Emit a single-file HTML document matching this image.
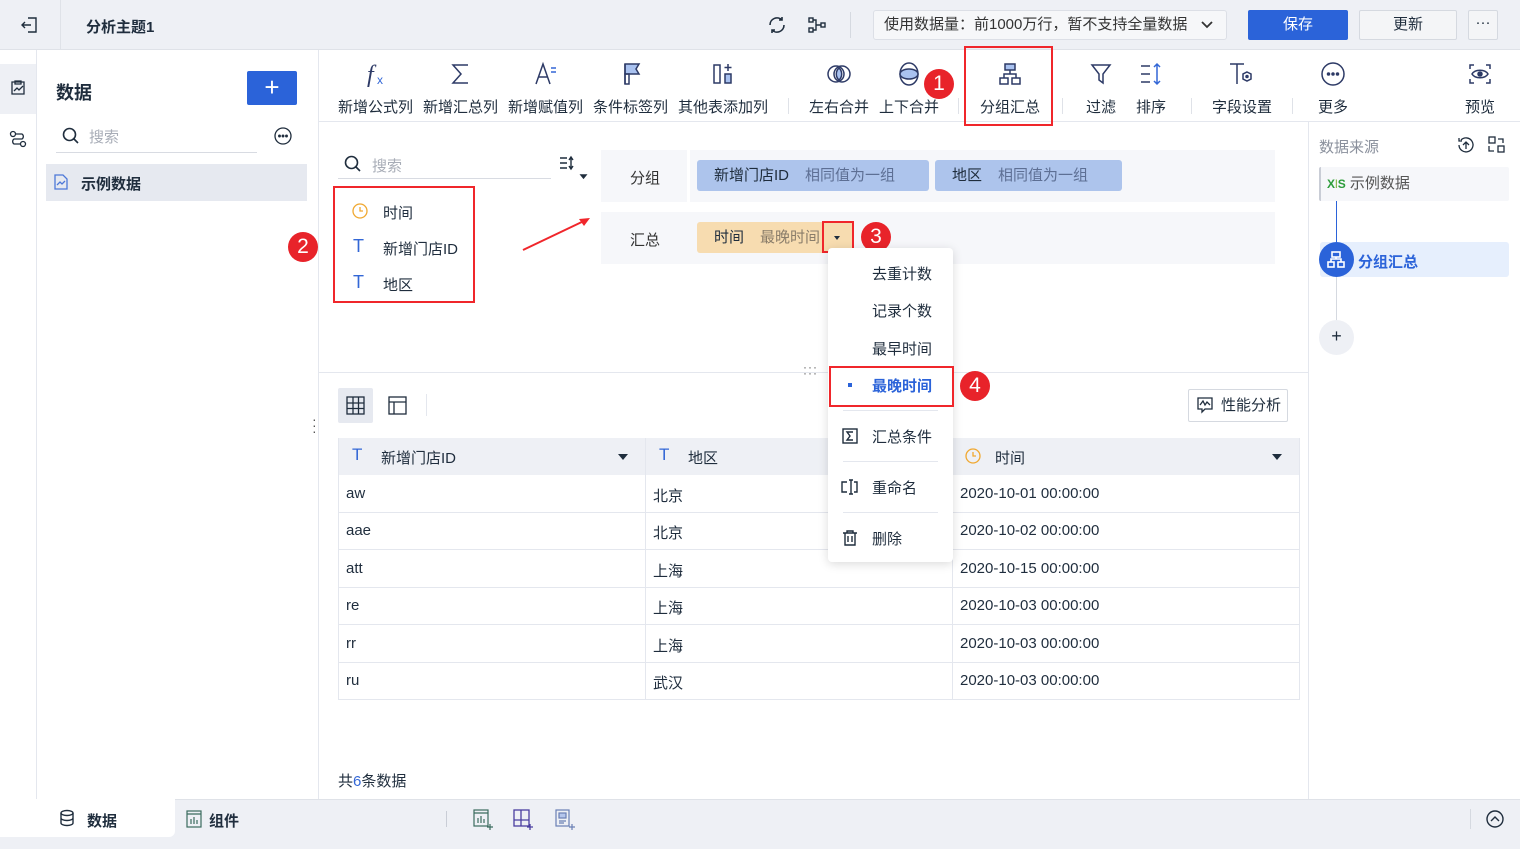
<!DOCTYPE html>
<html><head><meta charset="utf-8"><style>
*{box-sizing:border-box;margin:0;padding:0}
body{width:1520px;height:849px;overflow:hidden;background:#fff;font-family:"Liberation Sans","Noto Sans CJK SC",sans-serif;font-size:15px;color:#1f2d3d;position:relative}
.a{position:absolute}
.red{position:absolute;border:2px solid #f0262b}
.num{position:absolute;width:30px;height:30px;border-radius:50%;background:#e8232a;color:#fff;font-size:21px;text-align:center;line-height:30px}
.tb{position:absolute;top:60px;text-align:center;font-size:15px;color:#1f2d3d}
.tb svg{display:block;margin:0 auto 8px}
.sep{position:absolute;width:1px;background:#dfe2e8}
.row{position:absolute;left:338px;width:962px;height:38px;border-bottom:1px solid #e4e7ee;font-size:15px}
.row span{position:absolute;top:10px}
.mi{position:absolute;left:872px;font-size:15px;color:#1f2d3d}
</style></head><body>
<!-- top bar -->
<div class="a" style="left:0;top:0;width:1520px;height:50px;background:#eef0f5;border-bottom:1px solid #dfe2e8"></div>
<div class="a" style="left:60px;top:0;width:1px;height:50px;background:#dfe2e8"></div>
<svg class="a" style="left:20px;top:15px" width="20" height="20" viewBox="0 0 20 20" fill="none" stroke="#1f2d3d" stroke-width="1.4"><path d="M8 3h8v14H8M2 10h9M5 7l-3 3 3 3"/></svg>
<div class="a" style="left:86px;top:16px;font-size:15px;font-weight:bold">分析主题1</div>
<svg class="a" style="left:766px;top:14px" width="22" height="22" viewBox="0 0 22 22" fill="none" stroke="#1f2d3d" stroke-width="1.6"><path d="M4 11a7 7 0 0 1 12-5M18 11a7 7 0 0 1-12 5"/><path d="M16 3v3h-3M6 19v-3h3"/></svg>
<svg class="a" style="left:806px;top:15px" width="22" height="20" viewBox="0 0 22 20" fill="none" stroke="#1f2d3d" stroke-width="1.4"><rect x="3" y="3" width="4" height="4"/><rect x="3" y="13" width="4" height="4"/><rect x="15" y="8" width="4" height="4"/><path d="M7 5h3v10H7M10 10h5"/></svg>
<div class="a" style="left:850px;top:12px;width:1px;height:26px;background:#d5d9e0"></div>
<div class="a" style="left:873px;top:10px;width:354px;height:30px;background:#f6f7f9;border:1px solid #dcdfe6;border-radius:3px;font-size:15px;line-height:28px;padding-left:10px;color:#333">使用数据量：前1000万行，暂不支持全量数据<svg style="position:absolute;right:12px;top:8px" width="14" height="12" viewBox="0 0 14 12" fill="none" stroke="#333" stroke-width="1.8"><path d="M2 3l5 5 5-5"/></svg></div>
<div class="a" style="left:1248px;top:10px;width:100px;height:30px;background:#2b63d9;border-radius:2px;color:#fff;text-align:center;line-height:30px;font-size:15px">保存</div>
<div class="a" style="left:1359px;top:10px;width:98px;height:30px;background:#f4f5f7;border:1px solid #d5d9e0;border-radius:2px;text-align:center;line-height:28px;font-size:15px">更新</div>
<div class="a" style="left:1468px;top:10px;width:30px;height:30px;background:#f4f5f7;border:1px solid #d5d9e0;border-radius:2px;text-align:center;line-height:24px;font-size:15px">···</div>

<!-- left rail -->
<div class="a" style="left:36px;top:50px;width:1px;height:750px;background:#e4e7ee"></div>
<div class="a" style="left:0;top:64px;width:36px;height:50px;background:#eef0f5"></div>
<svg class="a" style="left:9px;top:79px" width="18" height="18" viewBox="0 0 18 18" fill="none" stroke="#1f2d3d" stroke-width="1.3"><path d="M3 3h12v12H3zM6 2h6v3H6z"/><path d="M5 12l3-3 2 2 4-4"/></svg>
<svg class="a" style="left:8px;top:129px" width="20" height="20" viewBox="0 0 20 20" fill="none" stroke="#1f2d3d" stroke-width="1.3"><circle cx="5" cy="5" r="2.5"/><circle cx="15" cy="15" r="2.5"/><path d="M7.5 5H14a3 3 0 0 1 0 5H6a3 3 0 0 0 0 5h6.5"/></svg>

<!-- left panel -->
<div class="a" style="left:318px;top:50px;width:1px;height:750px;background:#e4e7ee"></div>
<div class="a" style="left:56px;top:79px;font-size:18px;font-weight:bold">数据</div>
<div class="a" style="left:247px;top:71px;width:50px;height:34px;background:#2b63d9;border-radius:2px;color:#fff;font-size:26px;text-align:center;line-height:32px">+</div>
<svg class="a" style="left:61px;top:126px" width="20" height="20" viewBox="0 0 20 20" fill="none" stroke="#1f2d3d" stroke-width="1.6"><circle cx="8.5" cy="8.5" r="6"/><path d="M13 13l4 4"/></svg>
<div class="a" style="left:89px;top:126px;color:#a8adb7">搜索</div>
<div class="a" style="left:56px;top:152px;width:201px;height:1px;background:#d8dbe2"></div>
<svg class="a" style="left:273px;top:126px" width="20" height="20" viewBox="0 0 20 20" fill="none" stroke="#1f2d3d" stroke-width="1.3"><circle cx="10" cy="10" r="8"/><circle cx="6.5" cy="10" r=".8" fill="#1f2d3d"/><circle cx="10" cy="10" r=".8" fill="#1f2d3d"/><circle cx="13.5" cy="10" r=".8" fill="#1f2d3d"/></svg>
<div class="a" style="left:46px;top:164px;width:261px;height:37px;background:#e6e9f0"></div>
<svg class="a" style="left:53px;top:173px" width="16" height="18" viewBox="0 0 16 18" fill="none" stroke="#4d78d8" stroke-width="1.3"><path d="M2 2h8l4 4v10H2z"/><path d="M4 12l3-3 2 2 3-3"/></svg>
<div class="a" style="left:81px;top:173px;font-weight:bold">示例数据</div>
<div class="a" style="left:312px;top:416px;font-size:14px;line-height:6px;color:#555">·<br>·<br>·</div>

<!-- toolbar -->
<div class="a" style="left:318px;top:121px;width:1202px;height:1px;background:#e4e7ee"></div>
<div class="tb" style="left:338px"><svg width="26" height="28" viewBox="0 0 26 28"><text x="4" y="22" font-size="24" font-style="italic" font-family="Liberation Serif" fill="#2d3a66">f</text><text x="14" y="24" font-size="12" fill="#3367d6">x</text></svg>新增公式列</div>
<div class="tb" style="left:423px"><svg width="26" height="28" viewBox="0 0 26 28" fill="none" stroke="#2d3a66" stroke-width="1.5"><path d="M20 5H5l8 9-8 9h15"/></svg>新增汇总列</div>
<div class="tb" style="left:508px"><svg width="26" height="28" viewBox="0 0 26 28" fill="none" stroke="#2d3a66" stroke-width="1.5"><path d="M3 24L10 4l7 20M6 17h9"/><path d="M18 8h5M18 12h5" stroke="#3367d6"/></svg>新增赋值列</div>
<div class="tb" style="left:593px"><svg width="26" height="28" viewBox="0 0 26 28" fill="none" stroke="#2d3a66" stroke-width="1.5"><path d="M7 4h14l-3 5 3 5H7z" fill="#a9c2f0"/><path d="M7 4v20"/><rect x="7" y="14" width="4" height="10"/></svg>条件标签列</div>
<div class="tb" style="left:678px"><svg width="26" height="28" viewBox="0 0 26 28" fill="none" stroke="#2d3a66" stroke-width="1.5"><rect x="4" y="5" width="6" height="18"/><rect x="15" y="14" width="6" height="9" fill="#a9c2f0"/><path d="M18 4v7M14.5 7.5h7"/></svg>其他表添加列</div>
<div class="sep" style="left:788px;top:98px;height:16px"></div>
<div class="tb" style="left:809px"><svg width="26" height="28" viewBox="0 0 26 28" fill="none" stroke="#2d3a66" stroke-width="1.5"><circle cx="10" cy="14" r="8"/><circle cx="16" cy="14" r="8"/><path d="M13 8a8 8 0 0 1 0 12 8 8 0 0 1 0-12z" fill="#a9c2f0"/></svg>左右合并</div>
<div class="tb" style="left:879px"><svg width="26" height="28" viewBox="0 0 26 28" fill="none" stroke="#2d3a66" stroke-width="1.5"><ellipse cx="13" cy="14" rx="9" ry="11"/><path d="M4 14a9 5 0 0 1 18 0 9 5 0 0 1-18 0z" fill="#a9c2f0"/></svg>上下合并</div>
<div class="sep" style="left:958px;top:98px;height:16px"></div>
<div class="tb" style="left:980px"><svg width="26" height="28" viewBox="0 0 26 28" fill="none" stroke="#2d3a66" stroke-width="1.5"><rect x="8" y="4" width="10" height="6" fill="#a9c2f0"/><rect x="3" y="18" width="8" height="6"/><rect x="15" y="18" width="8" height="6"/><path d="M13 10v4M7 18v-4h12v4"/></svg>分组汇总</div>
<div class="sep" style="left:1062px;top:98px;height:16px"></div>
<div class="tb" style="left:1086px"><svg width="26" height="28" viewBox="0 0 26 28" fill="none" stroke="#2d3a66" stroke-width="1.5"><path d="M4 5h18l-7 9v9l-4-3v-6z"/></svg>过滤</div>
<div class="tb" style="left:1136px"><svg width="26" height="28" viewBox="0 0 26 28" fill="none" stroke="#2d3a66" stroke-width="1.5"><path d="M3 6h9M3 14h9M3 22h9"/><path d="M19 4v20M16 7l3-3 3 3M16 21l3 3 3-3" stroke="#3367d6"/></svg>排序</div>
<div class="sep" style="left:1191px;top:98px;height:16px"></div>
<div class="tb" style="left:1212px"><svg width="30" height="28" viewBox="0 0 30 28" fill="none" stroke="#2d3a66" stroke-width="1.5"><path d="M3 4h14M10 4v20"/><path d="M20 12l4 2v5l-4 2-4-2v-5z"/><circle cx="20" cy="16.5" r="1" fill="#3367d6"/></svg>字段设置</div>
<div class="sep" style="left:1292px;top:98px;height:16px"></div>
<div class="tb" style="left:1318px"><svg width="26" height="28" viewBox="0 0 26 28" fill="none" stroke="#2d3a66" stroke-width="1.5"><circle cx="13" cy="14" r="11"/><circle cx="8.5" cy="14" r="1" fill="#2d3a66"/><circle cx="13" cy="14" r="1" fill="#2d3a66"/><circle cx="17.5" cy="14" r="1" fill="#2d3a66"/></svg>更多</div>
<div class="tb" style="left:1465px"><svg width="26" height="28" viewBox="0 0 26 28" fill="none" stroke="#2d3a66" stroke-width="1.5"><path d="M3 9V5h4M19 5h4v4M3 19v4h4M19 23h4v-4"/><path d="M5 14c3-5 13-5 16 0-3 5-13 5-16 0z"/><circle cx="13" cy="14" r="2" fill="#2d3a66"/></svg>预览</div>
<div class="red" style="left:964px;top:46px;width:89px;height:80px"></div>
<div class="num" style="left:924px;top:69px">1</div>

<!-- config area -->
<svg class="a" style="left:343px;top:154px" width="20" height="20" viewBox="0 0 20 20" fill="none" stroke="#1f2d3d" stroke-width="1.6"><circle cx="8.5" cy="8.5" r="6"/><path d="M13 13l4 4"/></svg>
<div class="a" style="left:372px;top:155px;color:#a8adb7">搜索</div>
<div class="a" style="left:338px;top:178px;width:213px;height:1px;background:#d8dbe2"></div>
<svg class="a" style="left:558px;top:155px" width="30" height="26" viewBox="0 0 30 26" fill="none" stroke="#1f2d3d" stroke-width="1.4"><path d="M2 3h7M2 8h7M2 13h7M13 2v12M11 5l2-3 2 3M11 11l2 3 2-3"/><path d="M23 20h5l-2.5 3z" fill="#1f2d3d"/></svg>
<svg class="a" style="left:351px;top:202px" width="18" height="18" viewBox="0 0 18 18" fill="none" stroke="#f0a830" stroke-width="1.3"><circle cx="9" cy="9" r="7"/><path d="M9 5v4h3"/></svg>
<div class="a" style="left:383px;top:202px">时间</div>
<div class="a" style="left:353px;top:236px;color:#3367d6;font-size:18px">T</div>
<div class="a" style="left:383px;top:238px">新增门店ID</div>
<div class="a" style="left:353px;top:272px;color:#3367d6;font-size:18px">T</div>
<div class="a" style="left:383px;top:274px">地区</div>
<div class="red" style="left:333px;top:186px;width:142px;height:117px"></div>
<div class="num" style="left:288px;top:232px">2</div>
<svg class="a" style="left:520px;top:215px" width="72" height="38" viewBox="0 0 72 38"><path d="M3 35L66 5" stroke="#f0262b" stroke-width="2"/><path d="M70 3l-11 1 5 7z" fill="#f0262b"/></svg>

<div class="a" style="left:601px;top:150px;width:674px;height:52px;background:#f6f7fa"></div>
<div class="a" style="left:687px;top:150px;width:3px;height:114px;background:#fff"></div>
<div class="a" style="left:601px;top:202px;width:674px;height:10px;background:#fff"></div>
<div class="a" style="left:601px;top:212px;width:674px;height:52px;background:#f6f7fa"></div>
<div class="a" style="left:630px;top:167px;color:#333">分组</div>
<div class="a" style="left:630px;top:229px;color:#333">汇总</div>
<div class="a" style="left:697px;top:160px;width:232px;height:31px;background:#adc4ec;border-radius:3px;line-height:31px;padding-left:17px">新增门店ID<span style="color:#5d6f94;margin-left:16px">相同值为一组</span></div>
<div class="a" style="left:935px;top:160px;width:187px;height:31px;background:#adc4ec;border-radius:3px;line-height:31px;padding-left:17px">地区<span style="color:#5d6f94;margin-left:16px">相同值为一组</span></div>
<div class="a" style="left:697px;top:222px;width:156px;height:31px;background:#f7dcb0;border-radius:3px;line-height:31px;padding-left:17px">时间<span style="color:#8a7d6a;margin-left:16px">最晚时间</span></div>
<div class="red" style="left:822px;top:221px;width:32px;height:32px"></div>
<div class="a" style="left:834px;top:236px;width:0;height:0;border-left:3.5px solid transparent;border-right:3.5px solid transparent;border-top:4px solid #1f2d3d"></div>
<div class="num" style="left:861px;top:222px">3</div>

<!-- divider -->
<div class="a" style="left:318px;top:372px;width:990px;height:1px;background:#e4e7ee"></div>
<div class="a" style="left:803px;top:364px;font-size:12px;line-height:6px;color:#666;letter-spacing:1px">···<br>···</div>

<!-- right panel -->
<div class="a" style="left:1308px;top:122px;width:1px;height:678px;background:#e4e7ee"></div>
<div class="a" style="left:1319px;top:136px;color:#8a909c">数据来源</div>
<svg class="a" style="left:1456px;top:135px" width="20" height="20" viewBox="0 0 20 20" fill="none" stroke="#1f2d3d" stroke-width="1.3"><path d="M3 10a7 7 0 1 0 2-5M3 3v3h3M10 14V7M7 10l3-3 3 3"/></svg>
<svg class="a" style="left:1487px;top:135px" width="20" height="20" viewBox="0 0 20 20" fill="none" stroke="#1f2d3d" stroke-width="1.3"><rect x="2" y="2" width="6" height="6"/><rect x="11" y="11" width="6" height="6"/><path d="M11 4h5v4M2 11v5h5"/></svg>
<div class="a" style="left:1319px;top:167px;width:190px;height:34px;background:#f6f7fa;border-left:2px solid #c9cdd6;border-radius:2px;line-height:34px;padding-left:6px;color:#555"><span style="color:#2c9c3a;font-size:12px;font-weight:bold">X</span><span style="color:#7bb33a;font-size:12px">l</span><span style="color:#2c9c3a;font-size:12px;font-weight:bold">S</span> 示例数据</div>
<div class="a" style="left:1336px;top:201px;width:1px;height:42px;background:#2b63d9"></div>
<div class="a" style="left:1336px;top:275px;width:1px;height:48px;background:#d5d9e0"></div>
<div class="a" style="left:1320px;top:242px;width:189px;height:35px;background:#e6effd;border-radius:3px"></div>
<div class="a" style="left:1319px;top:242px;width:35px;height:35px;border-radius:50%;background:#2b63d9"></div>
<svg class="a" style="left:1326px;top:250px" width="20" height="19" viewBox="0 0 20 19" fill="none" stroke="#fff" stroke-width="1.6"><rect x="6" y="2" width="8" height="5"/><rect x="2" y="12" width="6" height="5"/><rect x="12" y="12" width="6" height="5"/><path d="M10 7v2M5 12v-3h10v3"/></svg>
<div class="a" style="left:1358px;top:251px;color:#2b63d9;font-weight:bold">分组汇总</div>
<div class="a" style="left:1319px;top:320px;width:35px;height:35px;border-radius:50%;background:#eef0f5;text-align:center;line-height:33px;font-size:18px">+</div>

<!-- table toolbar -->
<div class="a" style="left:338px;top:388px;width:35px;height:35px;background:#e6e9f0;border-radius:2px"></div>
<svg class="a" style="left:346px;top:396px" width="19" height="19" viewBox="0 0 19 19" fill="none" stroke="#1f2d3d" stroke-width="1.3"><rect x="1" y="1" width="17" height="17"/><path d="M1 7h17M1 12.5h17M7 1v17M12.5 1v17"/></svg>
<svg class="a" style="left:388px;top:396px" width="19" height="19" viewBox="0 0 19 19" fill="none" stroke="#1f2d3d" stroke-width="1.3"><rect x="1" y="1" width="17" height="17"/><path d="M1 6h17M6 6v12"/></svg>
<div class="a" style="left:426px;top:394px;width:1px;height:22px;background:#e4e7ee"></div>
<div class="a" style="left:1188px;top:389px;width:100px;height:33px;border:1px solid #d5d9e0;border-radius:2px;line-height:31px;padding-left:32px">性能分析</div>
<svg class="a" style="left:1196px;top:396px" width="18" height="18" viewBox="0 0 18 18" fill="none" stroke="#1f2d3d" stroke-width="1.3"><path d="M2 2h14v11H9l-3 3v-3H2z"/><path d="M4 9l3-4 2 4 2-3 3 3"/></svg>

<!-- table -->
<div class="a" style="left:338px;top:438px;width:962px;height:37px;background:#eef0f5"></div>
<div class="a" style="left:645px;top:438px;width:1px;height:262px;background:#e4e7ee"></div>
<div class="a" style="left:952px;top:438px;width:1px;height:262px;background:#e4e7ee"></div>
<div class="a" style="left:338px;top:438px;width:1px;height:262px;background:#e4e7ee"></div>
<div class="a" style="left:1299px;top:438px;width:1px;height:262px;background:#e4e7ee"></div>
<div class="a" style="left:352px;top:445px;color:#3367d6;font-size:17px">T</div>
<div class="a" style="left:381px;top:447px">新增门店ID</div>
<div class="a" style="left:618px;top:454px;border-left:5px solid transparent;border-right:5px solid transparent;border-top:6px solid #1f2d3d"></div>
<div class="a" style="left:659px;top:445px;color:#3367d6;font-size:17px">T</div>
<div class="a" style="left:688px;top:447px">地区</div>
<svg class="a" style="left:964px;top:447px" width="18" height="18" viewBox="0 0 18 18" fill="none" stroke="#f0a830" stroke-width="1.3"><circle cx="9" cy="9" r="7"/><path d="M9 5v4h3"/></svg>
<div class="a" style="left:995px;top:447px">时间</div>
<div class="a" style="left:1272px;top:454px;border-left:5px solid transparent;border-right:5px solid transparent;border-top:6px solid #1f2d3d"></div>
<div class="row" style="top:475px"><span style="left:8px">aw</span><span style="left:315px">北京</span><span style="left:622px">2020-10-01 00:00:00</span></div>
<div class="row" style="top:512px"><span style="left:8px">aae</span><span style="left:315px">北京</span><span style="left:622px">2020-10-02 00:00:00</span></div>
<div class="row" style="top:550px"><span style="left:8px">att</span><span style="left:315px">上海</span><span style="left:622px">2020-10-15 00:00:00</span></div>
<div class="row" style="top:587px"><span style="left:8px">re</span><span style="left:315px">上海</span><span style="left:622px">2020-10-03 00:00:00</span></div>
<div class="row" style="top:625px"><span style="left:8px">rr</span><span style="left:315px">上海</span><span style="left:622px">2020-10-03 00:00:00</span></div>
<div class="row" style="top:662px"><span style="left:8px">ru</span><span style="left:315px">武汉</span><span style="left:622px">2020-10-03 00:00:00</span></div>
<div class="a" style="left:338px;top:770px">共<span style="color:#3367d6">6</span>条数据</div>

<!-- dropdown menu -->
<div class="a" style="left:828px;top:248px;width:125px;height:314px;background:#fff;border-radius:4px;box-shadow:0 2px 10px rgba(0,0,0,.15)"></div>
<div class="mi" style="top:263px">去重计数</div>
<div class="mi" style="top:300px">记录个数</div>
<div class="mi" style="top:338px">最早时间</div>
<div class="a" style="left:848px;top:383px;width:4px;height:4px;background:#2b63d9"></div>
<div class="mi" style="top:375px;color:#2b63d9;font-weight:bold">最晚时间</div>
<div class="red" style="left:829px;top:366px;width:125px;height:41px"></div>
<div class="num" style="left:960px;top:371px">4</div>
<div class="a" style="left:843px;top:410px;width:95px;height:1px;background:#e4e7ee"></div>
<svg class="a" style="left:841px;top:427px" width="18" height="18" viewBox="0 0 18 18" fill="none" stroke="#1f2d3d" stroke-width="1.4"><rect x="2" y="2" width="14" height="14"/><path d="M12 5H6l3 4-3 4h6"/></svg>
<div class="mi" style="top:426px">汇总条件</div>
<div class="a" style="left:843px;top:461px;width:95px;height:1px;background:#e4e7ee"></div>
<svg class="a" style="left:840px;top:478px" width="20" height="18" viewBox="0 0 20 18" fill="none" stroke="#1f2d3d" stroke-width="1.4"><path d="M7 4H2v10h5M14 4h3v10h-3M11 2v14M9 2h4M9 16h4"/></svg>
<div class="mi" style="top:477px">重命名</div>
<div class="a" style="left:843px;top:512px;width:95px;height:1px;background:#e4e7ee"></div>
<svg class="a" style="left:841px;top:529px" width="18" height="18" viewBox="0 0 18 18" fill="none" stroke="#1f2d3d" stroke-width="1.4"><path d="M2 4h14M6 4V2h6v2M4 4v12h10V4M7 7v6M11 7v6"/></svg>
<div class="mi" style="top:528px">删除</div>

<!-- bottom bar -->
<div class="a" style="left:0;top:799px;width:1520px;height:50px;background:#eef0f5;border-top:1px solid #dfe2e8"></div>
<div class="a" style="left:0;top:799px;width:175px;height:38px;background:#fff;border-radius:0 0 6px 0"></div>
<svg class="a" style="left:58px;top:809px" width="18" height="18" viewBox="0 0 18 18" fill="none" stroke="#1f2d3d" stroke-width="1.4"><ellipse cx="9" cy="4" rx="6" ry="2.5"/><path d="M3 4v10c0 1.4 2.7 2.5 6 2.5s6-1.1 6-2.5V4M3 9c0 1.4 2.7 2.5 6 2.5s6-1.1 6-2.5"/></svg>
<div class="a" style="left:87px;top:810px;font-weight:bold">数据</div>
<svg class="a" style="left:186px;top:810px" width="16" height="18" viewBox="0 0 16 18" fill="none" stroke="#3a6b5e" stroke-width="1.2"><rect x="1" y="1" width="14" height="16"/><path d="M1 4h14M5 14V9M8 14V7M11 14v-4"/></svg>
<div class="a" style="left:209px;top:810px;font-weight:bold">组件</div>
<div class="a" style="left:446px;top:811px;width:1px;height:16px;background:#c9cdd6"></div>
<svg class="a" style="left:473px;top:809px" width="22" height="22" viewBox="0 0 22 22" fill="none" stroke="#3a6b5e" stroke-width="1.2"><rect x="1" y="1" width="14" height="16"/><path d="M1 4h14M5 14V9M8 14V7M11 14v-4M17 15v6M14 18h6"/></svg>
<svg class="a" style="left:513px;top:809px" width="22" height="22" viewBox="0 0 22 22" fill="none" stroke="#4a3fa0" stroke-width="1.3"><rect x="1" y="1" width="15" height="16"/><path d="M1 11h15M8 1v16M17 15v6M14 18h6"/></svg>
<svg class="a" style="left:555px;top:809px" width="22" height="22" viewBox="0 0 22 22" fill="none" stroke="#6a7fb5" stroke-width="1.2"><rect x="1" y="1" width="13" height="16"/><rect x="4" y="4" width="7" height="5" fill="#b5c6ec"/><path d="M4 12h7M4 14h5M17 15v6M14 18h6"/></svg>
<div class="a" style="left:1470px;top:809px;width:1px;height:20px;background:#d5d9e0"></div>
<svg class="a" style="left:1485px;top:809px" width="20" height="20" viewBox="0 0 20 20" fill="none" stroke="#1f2d3d" stroke-width="1.4"><circle cx="10" cy="10" r="8"/><path d="M6 12l4-4 4 4"/></svg>
</body></html>
